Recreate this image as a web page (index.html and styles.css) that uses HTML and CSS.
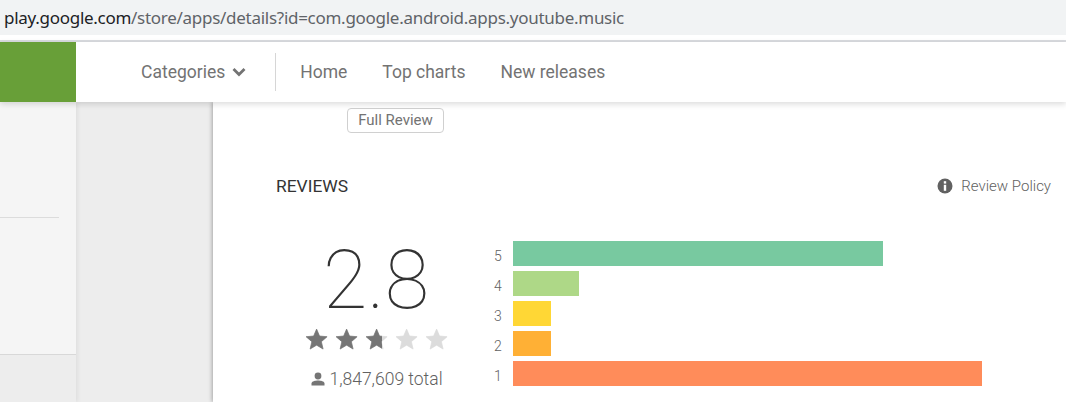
FILE: index.html
```html
<!DOCTYPE html>
<html lang="en">
<head>
<meta charset="utf-8">
<title>YouTube Music - Google Play</title>
<link rel="stylesheet" href="styles.css">
</head>
<body>
<div class="urlbar"><span class="host">play.google.com</span><span class="path">/store/apps/details?id=com.google.android.apps.youtube.music</span></div>
<div class="chrome-gap"></div>
<header class="nav">
  <div class="brand"></div>
  <nav class="links">
    <a class="cat">Categories
      <svg class="chev" width="14" height="10" viewBox="0 0 14 10"><path d="M1.5 2 7 7.500 12.500 2" fill="none" stroke="#737373" stroke-width="2.800"/></svg>
    </a>
    <span class="sep"></span>
    <a class="home">Home</a>
    <a>Top charts</a>
    <a>New releases</a>
  </nav>
</header>
<main class="page">
  <aside class="side">
    <div class="side-panel"><div class="side-rule"></div></div>
  </aside>
  <div class="gutter"></div>
  <section class="card">
    <div class="full-wrap"><button class="full">Full Review</button></div>
    <div class="rev-head">
      <h2>REVIEWS</h2>
      <a class="policy">
        <svg width="16" height="16" viewBox="0 0 16 16"><circle cx="8" cy="8" r="7.500" fill="#616161"/><rect x="6.800" y="3.200" width="2.400" height="2.400" fill="#fff"/><rect x="6.800" y="6.800" width="2.400" height="6" fill="#fff"/></svg>
        Review Policy</a>
    </div>
    <div class="summary">
      <div class="score">
        <div class="num">2.8</div>
        <div class="stars">
          <svg width="140" height="22" viewBox="0 0 140 22">
            <defs>
              <path id="star" d="M12 17.270 18.180 21l-1.640-7.030L22 9.240l-7.190-.61L12 2 9.190 8.630 2 9.240l5.460 4.730L5.820 21z"/>
              <linearGradient id="part"><stop offset="74%" stop-color="#757575"/><stop offset="74%" stop-color="#dcdcdc"/></linearGradient>
            </defs>
            <use class="on" href="#star" transform="translate(-2 -1) scale(1.05)"/>
            <use class="on" href="#star" transform="translate(28 -1) scale(1.05)"/>
            <use class="half" href="#star" transform="translate(58 -1) scale(1.05)"/>
            <use class="off" href="#star" transform="translate(88 -1) scale(1.05)"/>
            <use class="off" href="#star" transform="translate(118 -1) scale(1.05)"/>
          </svg>
        </div>
        <div class="total">
          <svg width="14" height="14" viewBox="0 0 14 14"><circle cx="7" cy="4" r="3.400" fill="#757575"/><path d="M0.500 13.500v-2C.5 9.300 4.500 8.500 7 8.500s6.500.8 6.500 3v2z" fill="#757575"/></svg>
          1,847,609 total
        </div>
      </div>
      <div class="bars">
        <div class="row"><span class="lab">5</span><span class="bar b5" style="width:370px"></span></div>
        <div class="row"><span class="lab">4</span><span class="bar b4" style="width:66px"></span></div>
        <div class="row"><span class="lab">3</span><span class="bar b3" style="width:38px"></span></div>
        <div class="row"><span class="lab">2</span><span class="bar b2" style="width:38px"></span></div>
        <div class="row"><span class="lab">1</span><span class="bar b1" style="width:469px"></span></div>
      </div>
    </div>
  </section>
</main>
</body>
</html>
```
FILE: styles.css
```css
* { box-sizing: border-box; }
html, body { margin: 0; height: 402px; overflow: hidden; background: #fff; }
body { font-family: Roboto, "Liberation Sans", sans-serif; display: flex; flex-direction: column; }
.urlbar { height: 35px; background: #f1f3f4; padding-left: 4px; font: 17px/35px "Noto Sans", "Open Sans", sans-serif; white-space: nowrap; letter-spacing: -0.28px; }
.host { color: #202124; }
.path { color: #5f6368; }
.chrome-gap { height: 7px; border-bottom: 2px solid #dadce0; flex: none; }
.nav { height: 60px; flex: none; display: flex; background: #fff; box-shadow: 0 2px 6px rgba(0,0,0,.15); position: relative; z-index: 2; }
.brand { width: 76px; background: #689f38; }
.links { display: flex; align-items: center; padding: 0 0 0 65px; font-size: 17.5px; color: #737373; gap: 35px; }
.cat { display: flex; align-items: center; gap: 7px; }
.sep { width: 1px; height: 38px; background: #d6d6d6; margin: 0 -11px 0 -6px; }
.page { flex: 1; display: flex; min-height: 0; background: #ededed; }
.side { width: 76px; flex: none; box-shadow: 2px 0 4px rgba(0,0,0,.06); position: relative; }
.side-panel { height: 253px; background: #f5f5f5; border-bottom: 1px solid #d8d8d8; padding-top: 115px; }
.side-rule { width: 59px; height: 1px; background: #dcdcdc; }
.gutter { width: 137px; flex: none; }
.card { flex: 1; background: #fff; box-shadow: -1px 0 4px rgba(0,0,0,.3); padding: 0 15px 0 63px; min-width: 0; }
.full-wrap { padding: 6px 0 0 71px; height: 31px; }
.full { height: 25px; width: 97px; padding: 0 0 2px; background: #fff; border: 1px solid #d0d0d0; border-radius: 4px; font: 15px Roboto, sans-serif; color: #737373; }
.rev-head { display: flex; justify-content: space-between; align-items: center; margin-top: 43px; height: 20px; }
.rev-head h2 { margin: 0; font-size: 17.4px; font-weight: 400; color: #333; }
.policy { display: flex; align-items: center; gap: 8px; font-size: 15px; font-weight: 300; color: #616161; }
.summary { display: flex; margin-top: 45px; }
.score { width: 200px; display: flex; flex-direction: column; align-items: center; }
.num { font-size: 81px; font-weight: 100; line-height: 80px; color: #333; }
.stars { height: 22px; margin-top: 7px; }
.stars svg { display: block; overflow: visible; }
.stars use { stroke-width: .7; stroke-linejoin: round; }
.on { fill: #757575; stroke: #757575; }
.half { fill: url(#part); stroke: url(#part); }
.off { fill: #dcdcdc; stroke: #dcdcdc; }
.total { margin: 19px 0 0 2px; display: flex; align-items: center; gap: 4px; font-size: 17.5px; font-weight: 300; color: #616161; }
.bars { display: flex; flex-direction: column; gap: 5px; margin-left: 18px; }
.row { display: flex; align-items: center; height: 25px; }
.lab { width: 19px; padding-top: 4px; font-size: 14px; font-weight: 300; color: #616161; }
.bar { height: 25px; display: block; }
.b5 { background: #78c9a0; }
.b4 { background: #aed887; }
.b3 { background: #ffd735; }
.b2 { background: #ffb035; }
.b1 { background: #ff8c5a; }
```
